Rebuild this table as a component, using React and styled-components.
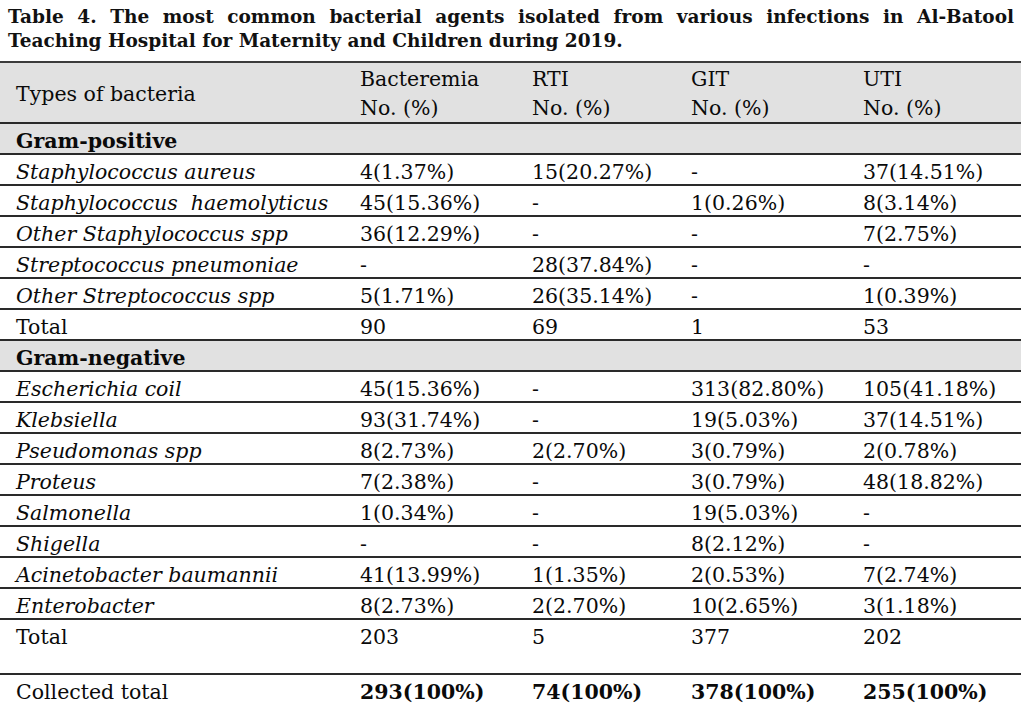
import React from 'react';
import styled, { createGlobalStyle } from 'styled-components';

const GlobalStyle = createGlobalStyle`
  html, body {
    margin: 0;
    padding: 0;
    background: #fff;
  }
  body {
    font-family: 'DejaVu Serif', 'Liberation Serif', serif;
    color: #0a0a0a;
  }
`;

const columns = '352px 172px 159px 172px 166px';

const rows = [
  { kind: 'group', label: 'Gram-positive' },
  { name: 'Staphylococcus aureus', values: ['4(1.37%)', '15(20.27%)', '-', '37(14.51%)'] },
  { name: 'Staphylococcus  haemolyticus', values: ['45(15.36%)', '-', '1(0.26%)', '8(3.14%)'] },
  { name: 'Other Staphylococcus spp', values: ['36(12.29%)', '-', '-', '7(2.75%)'] },
  { name: 'Streptococcus pneumoniae', values: ['-', '28(37.84%)', '-', '-'] },
  { name: 'Other Streptococcus spp', values: ['5(1.71%)', '26(35.14%)', '-', '1(0.39%)'] },
  { kind: 'total', name: 'Total', values: ['90', '69', '1', '53'] },
  { kind: 'group', label: 'Gram-negative' },
  { name: 'Escherichia coil', values: ['45(15.36%)', '-', '313(82.80%)', '105(41.18%)'] },
  { name: 'Klebsiella', values: ['93(31.74%)', '-', '19(5.03%)', '37(14.51%)'] },
  { name: 'Pseudomonas spp', values: ['8(2.73%)', '2(2.70%)', '3(0.79%)', '2(0.78%)'] },
  { name: 'Proteus', values: ['7(2.38%)', '-', '3(0.79%)', '48(18.82%)'] },
  { name: 'Salmonella', values: ['1(0.34%)', '-', '19(5.03%)', '-'] },
  { name: 'Shigella', values: ['-', '-', '8(2.12%)', '-'] },
  { name: 'Acinetobacter baumannii', values: ['41(13.99%)', '1(1.35%)', '2(0.53%)', '7(2.74%)'] },
  { name: 'Enterobacter', values: ['8(2.73%)', '2(2.70%)', '10(2.65%)', '3(1.18%)'] },
  { kind: 'total', name: 'Total', values: ['203', '5', '377', '202'], tall: true },
];

const headers = ['Bacteremia', 'RTI', 'GIT', 'UTI'];

export default function App() {
  return (
    <>
      <GlobalStyle />
      <Page>
        <Caption>
          <CaptionLine justify>
            Table 4. The most common bacterial agents isolated from various infections in Al-Batool
          </CaptionLine>
          <CaptionLine>Teaching Hospital for Maternity and Children during 2019.</CaptionLine>
        </Caption>

        <Table>
          <HeadRow>
            <HeadCell first center>Types of bacteria</HeadCell>
            {headers.map((h) => (
              <HeadCell key={h}>
                {h}
                <br />
                No. (%)
              </HeadCell>
            ))}
          </HeadRow>

          {rows.map((row, i) =>
            row.kind === 'group' ? (
              <GroupRow key={i}>
                <Cell first bold>{row.label}</Cell>
              </GroupRow>
            ) : (
              <Row key={i} tall={row.tall}>
                <Cell first italic={row.kind !== 'total'}>{row.name}</Cell>
                {row.values.map((v, j) => (
                  <Cell key={j}>{v}</Cell>
                ))}
              </Row>
            )
          )}

          <Row last>
            <Cell first>Collected total</Cell>
            <Cell bold>293(100%)</Cell>
            <Cell bold>74(100%)</Cell>
            <Cell bold>378(100%)</Cell>
            <Cell bold>255(100%)</Cell>
          </Row>
        </Table>
      </Page>
    </>
  );
}

const Page = styled.div`
  width: 1024px;
  height: 705px;
  overflow: hidden;
`;

const Caption = styled.div`
  padding: 5px 10px 0 8px;
  font-weight: bold;
  font-size: 18.5px;
  line-height: 24px;
  color: #111;
  height: 56px;
  box-sizing: border-box;
`;

const CaptionLine = styled.div`
  white-space: nowrap;
  ${({ justify }) =>
    justify &&
    `
    white-space: normal;
    text-align: justify;
    text-align-last: justify;
  `}
`;

const Table = styled.div`
  width: 1021px;
  margin-top: 5px;
`;

const Row = styled.div`
  display: grid;
  grid-template-columns: ${columns};
  height: ${({ tall }) => (tall ? '55px' : '31px')};
  box-sizing: border-box;
  border-bottom: ${({ last }) => (last ? 'none' : '2px solid #2a2a2a')};
  align-items: start;
`;

const HeadRow = styled.div`
  display: grid;
  grid-template-columns: ${columns};
  background: #e1e1e1;
  border-top: 2px solid #3c3c3c;
  border-bottom: 2px solid #2a2a2a;
  padding-top: 2px;
  height: 63px;
  box-sizing: border-box;
  font-size: 20.5px;
  line-height: 29px;
`;

const HeadCell = styled.div`
  padding-left: ${({ first }) => (first ? '16px' : '8px')};
  align-self: ${({ center }) => (center ? 'center' : 'start')};
  white-space: nowrap;
`;

const GroupRow = styled.div`
  height: 31px;
  box-sizing: border-box;
  background: #e1e1e1;
  border-bottom: 2px solid #2a2a2a;
`;

const Cell = styled.div`
  padding: 4px 0 0 ${({ first }) => (first ? '16px' : '8px')};
  font-size: 20.5px;
  line-height: 26px;
  white-space: pre;
  font-style: ${({ italic }) => (italic ? 'italic' : 'normal')};
  font-weight: ${({ bold }) => (bold ? 'bold' : 'normal')};
`;
